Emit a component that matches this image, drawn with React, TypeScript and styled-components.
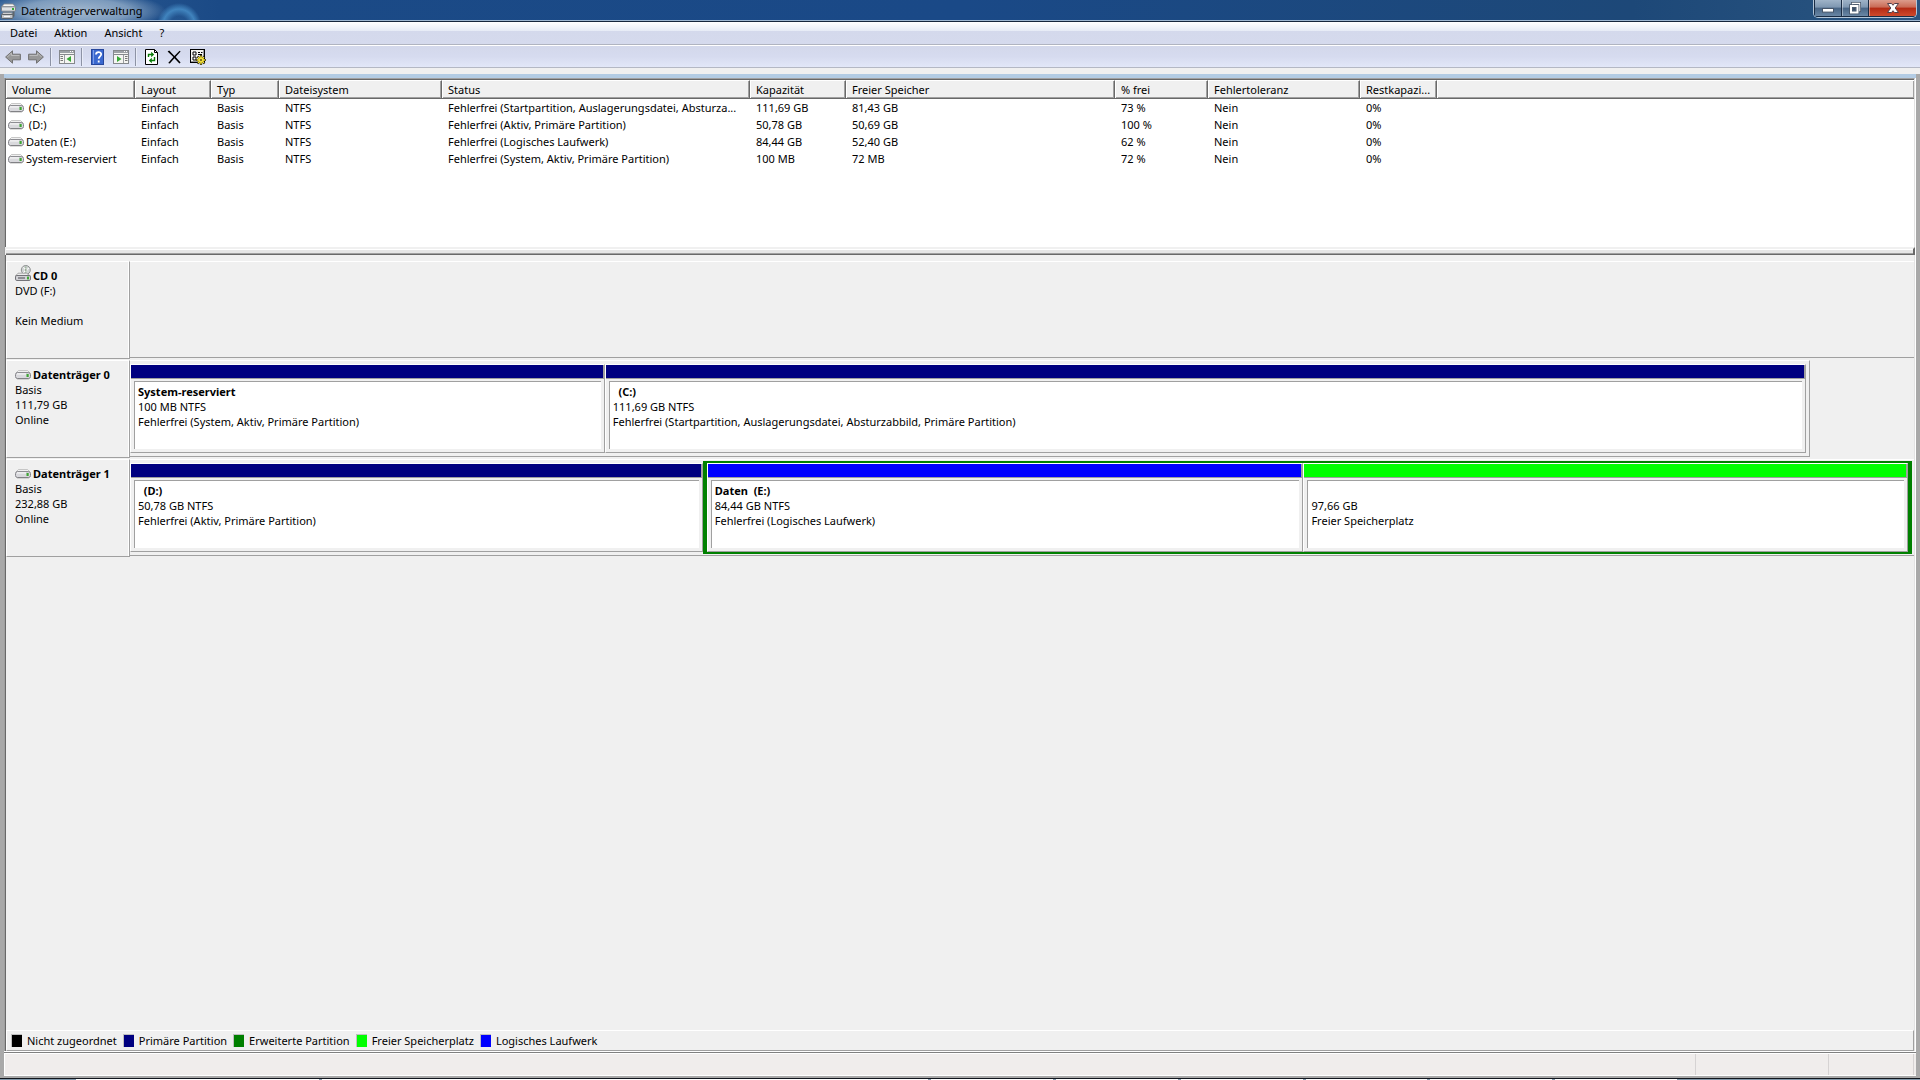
import React from "react";
import styled, { createGlobalStyle } from "styled-components";

const c = {
  face: "#f0f0f0",
  shade: "#a0a0a0",
  dark: "#696969",
  light: "#ffffff",
  frame: "#a9a9a9",
  navy: "#000080",
  blue: "#0000ff",
  green: "#008000",
  lime: "#00ff00",
};

const Global = createGlobalStyle`
  *, *::before, *::after { box-sizing: border-box; }
  body { margin: 0; background: ${c.frame}; color: #000; }
  body, button, table {
    font-family: "Noto Sans", "Open Sans", sans-serif;
    font-size: 11px;
    line-height: 15px;
  }
`;

const Desktop = styled.div`
  display: flex;
  flex-direction: column;
  min-height: 100vh;
`;

const Window = styled.main`
  flex: 1;
  display: flex;
  flex-direction: column;
  background: ${c.frame};
`;

/* ---------- title bar ---------- */

const TitleBar = styled.header`
  display: flex;
  align-items: flex-start;
  justify-content: space-between;
  height: 22px;
  border-bottom: 1px solid #16263c;
  box-shadow: inset 0 -1px 0 #9db6d0;
  background:
    radial-gradient(ellipse 90px 20px at 76px 11px, rgba(186, 202, 218, 0.85) 0%, rgba(160, 184, 208, 0.7) 60%, rgba(100, 140, 185, 0) 100%),
    radial-gradient(circle 22px at 179px 25px, rgba(70, 140, 200, 0.1) 40%, rgba(76, 150, 208, 0.75) 72%, rgba(70, 140, 200, 0) 100%),
    linear-gradient(90deg, #2d5c94 0, #1b4a86 220px, #1a4987 50%, #1d4878 85%, #2a5580 100%);
`;

const TitleGroup = styled.div`
  display: flex;
  align-items: center;
  gap: 5px;
  height: 21px;
  padding-left: 1px;
`;

const Title = styled.h1`
  margin: 0;
  font-size: 11px;
  font-weight: 400;
`;

const Caption = styled.div`
  display: flex;
  margin-right: 3px;
  border: 1px solid #b4c6d8;
  border-top: 0;
  border-radius: 0 0 5px 5px;
  overflow: hidden;
`;

const CaptionButton = styled.button<{ $close?: boolean }>`
  display: flex;
  align-items: center;
  justify-content: center;
  width: ${(p) => (p.$close ? 48 : 27)}px;
  height: 17px;
  padding: 0;
  border: 1px solid #1a2c44;
  border-width: 0 0 1px 1px;
  background: ${(p) =>
    p.$close
      ? "linear-gradient(#dc9c8c 0, #c96a55 45%, #b32a14 50%, #cf4a2c 100%)"
      : "linear-gradient(#9fb3c8 0, #7e97b1 45%, #486585 50%, #6a87a5 100%)"};
  & + & {
    box-shadow: inset 1px 0 0 rgba(255, 255, 255, 0.4);
  }
`;

/* ---------- menu and toolbar ---------- */

const MenuBar = styled.nav`
  display: flex;
  align-items: flex-start;
  gap: 1px;
  height: 23px;
  padding-left: 2px;
  border-bottom: 1px solid #b0b4c0;
  background: linear-gradient(#ffffff 0, #e6ebf6 9px, #d4d9ec 9px, #d5daed 100%);
`;

const MenuItem = styled.button`
  height: 21px;
  padding: 0 8px;
  border: 0;
  background: none;
`;

const Toolbar = styled.div`
  display: flex;
  align-items: center;
  gap: 1px;
  height: 23px;
  padding-left: 2px;
  border-top: 1px solid ${c.light};
  border-bottom: 1px solid #b4b8c4;
  background: linear-gradient(#d3d8eb 0, #d6dbef 50%, #e2e7f8 100%);
`;

const Tool = styled.button`
  display: flex;
  align-items: center;
  justify-content: center;
  width: 22px;
  height: 20px;
  padding: 0;
  border: 0;
  background: none;
`;

const Separator = styled.span`
  width: 2px;
  height: 18px;
  margin: 0 3px 0 2px;
  border-left: 1px solid #8d93a5;
  border-right: 1px solid #e8ecf8;
`;

const Spacer = styled.div`
  height: 6px;
  background: ${c.face};
`;

/* ---------- client area ---------- */

const Client = styled.div`
  flex: 1;
  display: flex;
  flex-direction: column;
  padding: 0 4px;
`;

const BlueStrip = styled.div`
  height: 4px;
  background: #b3cce4;
`;

const Panes = styled.div`
  flex: 1;
  display: flex;
  flex-direction: column;
  border-left: 1px solid ${c.shade};
  border-right: 1px solid ${c.light};
  background: ${c.face};
`;

const ListPane = styled.section`
  height: 169px;
  border-top: 1px solid ${c.shade};
  border-left: 1px solid ${c.dark};
  border-right: 1px solid #e3e3e3;
  background: ${c.light};
  box-shadow: inset 0 1px 0 ${c.dark};
`;

const Splitter = styled.div`
  height: 8px;
  margin-left: 1px;
  border-top: 2px solid ${c.face};
  border-bottom: 1px solid ${c.dark};
  border-right: 2px solid ${c.dark};
  background: linear-gradient(${c.light} 1px, #e6e6e6 1px, #e6e6e6 4px, ${c.shade} 4px);
`;

const VolumeTable = styled.table`
  width: 100%;
  margin-top: 1px;
  table-layout: fixed;
  border-collapse: separate;
  border-spacing: 0;
`;

const Col = styled.col<{ $w?: number }>`
  width: ${(p) => (p.$w ? `${p.$w}px` : "auto")};
`;

const HeadCell = styled.th`
  height: 19px;
  padding: 0 6px 1px;
  overflow: hidden;
  white-space: nowrap;
  text-align: left;
  font-weight: 400;
  background: ${c.face};
  border-top: 1px solid ${c.light};
  border-bottom: 1px solid ${c.dark};
  border-right: 1px solid ${c.dark};
  box-shadow: inset 1px 0 0 ${c.light}, inset -1px -1px 0 ${c.shade};
  &:last-child {
    border-right: 0;
  }
`;

const Cell = styled.td`
  height: 17px;
  padding: 0 6px;
  overflow: hidden;
  white-space: nowrap;
`;

const VolumeCell = styled(Cell)`
  padding: 0 2px;
`;

const VolumeName = styled.span`
  display: flex;
  align-items: center;
  gap: 2px;
  white-space: pre;
`;

const DiskPane = styled.section`
  flex: 1;
  display: flex;
  flex-direction: column;
  border-left: 1px solid ${c.dark};
  border-right: 1px solid #e3e3e3;
`;

const DiskList = styled.div`
  flex: 1;
  display: flex;
  flex-direction: column;
  gap: 1px;
  padding-top: 6px;
`;

const DiskRow = styled.article`
  display: flex;
  height: 98px;
`;

const DiskLabel = styled.div`
  flex: none;
  width: 124px;
  padding: 6px 0 0 8px;
  border: 1px solid ${c.shade};
  border-top-color: ${c.light};
  border-left-color: ${c.light};
  box-shadow: inset -1px 0 0 ${c.light};
`;

const DiskName = styled.h2`
  display: flex;
  align-items: flex-end;
  gap: 2px;
  height: 15px;
  margin: 0;
  font-size: 11px;
  font-weight: 700;
  svg {
    margin-bottom: 2px;
  }
`;

const Line = styled.p`
  min-height: 15px;
  margin: 0;
`;

const DiskTrack = styled.div`
  flex: 1;
  display: flex;
`;

const DiskFrame = styled.div<{ $share: number; $flush?: boolean }>`
  flex: none;
  display: flex;
  align-items: center;
  width: ${(p) => p.$share}%;
  height: 97px;
  padding-right: ${(p) => (p.$flush ? 2 : 3)}px;
  border-top: 1px solid ${c.light};
  border-bottom: 1px solid ${c.shade};
  border-right: ${(p) => (p.$flush ? "0" : `1px solid ${c.shade}`)};
`;

const Part = styled.div<{ $grow: number }>`
  flex: ${(p) => p.$grow} 1 0;
  min-width: 0;
  display: flex;
  flex-direction: column;
  height: 89px;
  border: 1px solid ${c.shade};
  border-top-color: ${c.light};
  border-left-color: ${c.light};
  background: ${c.face};
`;

const PartBar = styled.div<{ $color: string }>`
  height: 14px;
  background: ${(p) => p.$color};
  border-right: 1px solid ${c.shade};
  border-bottom: 1px solid ${c.shade};
`;

const PartBody = styled.div`
  flex: 1;
  margin: 2px 3px 3px;
  padding: 2px 0 0 3px;
  overflow: hidden;
  white-space: pre;
  background: ${c.light};
  border-top: 1px solid ${c.shade};
  border-left: 1px solid ${c.shade};
`;

const PartName = styled.h3`
  height: 15px;
  margin: 0;
  font-size: 11px;
  font-weight: 700;
`;

const Extended = styled.div<{ $grow: number }>`
  flex: ${(p) => p.$grow} 1 0;
  min-width: 0;
  display: flex;
  height: 93px;
  border: solid ${c.green};
  border-width: 2px 4px;
`;

const Legend = styled.ul`
  display: flex;
  align-items: center;
  gap: 6px;
  height: 21px;
  margin: 0;
  padding: 0 4px 1px;
  list-style: none;
  border: 1px solid ${c.shade};
  border-top-color: ${c.light};
  border-left-color: ${c.light};
`;

const LegendItem = styled.li`
  display: flex;
  align-items: center;
  gap: 5px;
`;

const Swatch = styled.span<{ $color: string }>`
  width: 11px;
  height: 13px;
  border: 1px solid #c0c0c0;
  border-width: 1px 0 0 1px;
  background: ${(p) => p.$color};
`;

const StatusBar = styled.footer`
  display: grid;
  grid-template-columns: 1fr 133px 85px 2px;
  height: 25px;
  border-top: 1px solid ${c.light};
  border-bottom: 1px solid ${c.light};
  background: #f0edec;
  box-shadow: inset 0 1px 0 #808080, inset 0 2px 0 ${c.light}, inset 1px 0 0 ${c.light};
`;

const StatusPane = styled.div`
  margin-top: 2px;
  border-right: 1px solid #d6d3d3;
`;

const BottomEdge = styled.div`
  height: 2px;
  background: ${c.frame};
`;

const Taskbar = styled.div`
  display: flex;
  gap: 3px;
  height: 2px;
  padding: 0 243px 0 76px;
  border-top: 1px solid #10151c;
  background: #8197a9;
`;

const Task = styled.span<{ $grow: number }>`
  flex: ${(p) => p.$grow} 1 0;
  background: ${c.light};
`;

/* ---------- drawings ---------- */

const DriveIcon = () => (
  <svg width="16" height="10" viewBox="0 0 16 10" aria-hidden="true">
    <path d="M3.4 .6h9.2l2.4 2.4H1z" fill="#f6f6f6" stroke="#b4b4b4" strokeWidth=".8" />
    <rect x=".5" y="2.6" width="15" height="5.9" rx="2" fill="#d9d9dd" stroke="#85858a" />
    <path d="M2 3.9h9" stroke="#fff" />
    <path d="M2 9h12" stroke="#777" strokeOpacity=".5" />
    <rect x="11.5" y="4" width="2.2" height="3" fill="#3fa535" />
  </svg>
);

const CdIcon = () => (
  <svg width="16" height="16" viewBox="0 0 16 16" aria-hidden="true">
    <circle cx="10.8" cy="5" r="4.5" fill="#d0d4d4" stroke="#8c8f8f" />
    <path d="M8 2.2l2.8 2.8 3.4-1.8M10.8 5l-2.6 3" stroke="#fff" fill="none" />
    <path d="M10.8 1.5v6.5" stroke="#8fae8c" />
    <circle cx="10.8" cy="5" r="1.3" fill="#7f927b" stroke="#fff" strokeWidth=".6" />
    <path d="M3 8.2h8.5l4 2.8H.5z" fill="#ededed" stroke="#999" strokeWidth=".8" />
    <rect x=".5" y="10.5" width="15" height="5" rx="1.4" fill="#d2d2d6" stroke="#737378" />
    <path d="M3 13h7" stroke="#4d4d55" />
    <rect x="12" y="11.6" width="2" height="2.8" fill="#3fa535" />
  </svg>
);

const AppIcon = () => (
  <svg width="15" height="16" viewBox="0 0 15 16" aria-hidden="true">
    <path d="M3 1h9l2.4 3H.6z" fill="#f6f6f6" stroke="#8a8a8a" strokeWidth=".8" />
    <rect x=".5" y="3.8" width="14" height="4.4" rx="1" fill="#dfe2e5" stroke="#7b8187" />
    <rect x="11" y="5" width="2" height="2" fill="#38a836" />
    <path d="M12.5 8.5v5" stroke="#5f656b" strokeWidth="2" />
    <path d="M2 9.8h8.5l1.5 2H.6z" fill="#fff" stroke="#777" strokeWidth=".8" />
    <rect x=".5" y="11.4" width="11.5" height="4" rx="1" fill="#c3c7cb" stroke="#555b61" />
    <path d="M3 13.4h6" stroke="#fff" />
  </svg>
);

const ArrowIcon = ({ forward }: { forward?: boolean }) => (
  <svg width="16" height="14" viewBox="0 0 16 14" aria-hidden="true">
    <path
      d={forward ? "M15.4 7L8.5.8v3.4H.6v5.6h7.9v3.4z" : "M.6 7l6.9-6.2v3.4h7.9v5.6H7.5v3.4z"}
      fill="#989898"
      stroke="#727272"
    />
    <path d={forward ? "M1.6 5.5h8V3l4 4" : "M14.4 5.5h-8V3l-4 4"} fill="none" stroke="#bbb" />
  </svg>
);

const PanelIcon = ({ mirrored }: { mirrored?: boolean }) => (
  <svg width="16" height="14" viewBox="0 0 16 14" aria-hidden="true">
    <rect x=".5" y=".5" width="15" height="13" fill="#f5f5f2" stroke="#85888c" />
    <path d="M1 2h14" stroke="#9da1a6" strokeWidth="2" />
    <path d="M11 1.5h1M13 1.5h1" stroke="#fff" />
    <path d="M1 4.5h14" stroke="#85888c" />
    {mirrored ? (
      <>
        <path d="M10.5 5v8" stroke="#9a9da1" />
        <path d="M12 6.5h2.5M12 8.5h2.5M12 10.5h2.5" stroke="#777" />
        <path d="M4 6v6l4.5-3z" fill="#35a835" />
      </>
    ) : (
      <>
        <path d="M5.5 5v8" stroke="#9a9da1" />
        <path d="M1.5 6.5H4M1.5 8.5H4M1.5 10.5H4" stroke="#777" />
        <path d="M12 6v6L7.5 9z" fill="#35a835" />
      </>
    )}
  </svg>
);

const HelpIcon = () => (
  <svg width="16" height="16" viewBox="0 0 16 16" aria-hidden="true">
    <rect x="1.5" y=".5" width="12" height="15" fill="#3a68cf" stroke="#27479c" />
    <path d="M3.5 1v14" stroke="#7d9ee6" />
    <path d="M6 5.6c0-3.4 5.2-3.2 5.2-.3 0 2-2.5 2.2-2.5 4.5M8.7 11.4v2" fill="none" stroke="#fff" strokeWidth="1.8" />
  </svg>
);

const RefreshIcon = () => (
  <svg width="16" height="16" viewBox="0 0 16 16" aria-hidden="true">
    <path d="M1.5.5h9l3 3v12h-12z" fill="#fff" stroke="#000" />
    <path d="M10.5.5v3h3" fill="none" stroke="#000" />
    <path d="M4.5 8V5.5H8M10.5 8v3.5H7" fill="none" stroke="#0a7d0a" strokeWidth="1.4" />
    <path d="M7.2 2.8v5.4l3-2.7zM7.8 8.8v5.4l-3-2.7z" fill="#0a7d0a" />
  </svg>
);

const DeleteIcon = () => (
  <svg width="16" height="16" viewBox="0 0 16 16" aria-hidden="true">
    <path d="M.6 2.6l1.6-1.2L7.4 7l5.2-5.2 1 .6-5 5.7 5 5.4-1.2 1-5-5.2-4.6 5.2-1.6-.4 5.2-6z" fill="#000" />
  </svg>
);

const SettingsIcon = () => (
  <svg width="16" height="16" viewBox="0 0 16 16" aria-hidden="true">
    <rect x=".5" y=".5" width="14" height="13" fill="#f4f4f0" stroke="#000" />
    <path d="M1 12.5h13M13.5 1v12" stroke="#999" />
    <path d="M3 3h3v3H3zM3 8h3v3H3z" fill="#fff" stroke="#000" />
    <path d="M8 3.5h2M11 3.5h1.5M8 5.5h4" stroke="#000" />
    <path d="M11 6v10M6 11h10M7.5 7.5l7 7M14.5 7.5l-7 7" stroke="#000" strokeWidth="2.2" />
    <path d="M11 6.5v9M6.5 11h9M8 8l6 6M14 8l-6 6" stroke="#f2df38" strokeWidth="1.4" />
    <circle cx="11" cy="11" r="2.8" fill="#f2df38" />
    <circle cx="11" cy="11" r="1" fill="#5a5210" />
  </svg>
);

const MinimizeGlyph = () => (
  <svg width="12" height="12" viewBox="0 0 12 12" aria-hidden="true">
    <rect x=".5" y="6.5" width="11" height="3.6" fill="#fff" stroke="#47566a" />
  </svg>
);

const RestoreGlyph = () => (
  <svg width="14" height="14" viewBox="0 0 14 14" aria-hidden="true">
    <path d="M4.5 4V2.5h7v7H10" fill="none" stroke="#47566a" strokeWidth="3" />
    <path d="M4.5 4V2.5h7v7H10" fill="none" stroke="#fff" strokeWidth="1.4" />
    <rect x="3" y="5" width="6.5" height="6.5" fill="#5a7492" stroke="#47566a" strokeWidth="3.6" />
    <rect x="3" y="5" width="6.5" height="6.5" fill="none" stroke="#fff" strokeWidth="2" />
    <rect x="5" y="7" width="2.5" height="2.5" fill="#3c5068" />
  </svg>
);

const CloseGlyph = () => (
  <svg width="14" height="12" viewBox="0 0 14 12" aria-hidden="true">
    <path
      d="M1.5 1.5h4L7 3.3l1.5-1.8h4L9.2 6l3.3 4.5h-4L7 8.7l-1.5 1.8h-4L4.8 6z"
      fill="#fff"
      stroke="#53404a"
    />
  </svg>
);

/* ---------- data ---------- */

const columns: { title: string; width?: number }[] = [
  { title: "Volume", width: 129 },
  { title: "Layout", width: 76 },
  { title: "Typ", width: 68 },
  { title: "Dateisystem", width: 163 },
  { title: "Status", width: 308 },
  { title: "Kapazität", width: 96 },
  { title: "Freier Speicher", width: 269 },
  { title: "% frei", width: 93 },
  { title: "Fehlertoleranz", width: 152 },
  { title: "Restkapazi...", width: 77 },
  { title: "" },
];

const volumes = [
  [" (C:)", "Fehlerfrei (Startpartition, Auslagerungsdatei, Absturza...", "111,69 GB", "81,43 GB", "73 %"],
  [" (D:)", "Fehlerfrei (Aktiv, Primäre Partition)", "50,78 GB", "50,69 GB", "100 %"],
  ["Daten (E:)", "Fehlerfrei (Logisches Laufwerk)", "84,44 GB", "52,40 GB", "62 %"],
  ["System-reserviert", "Fehlerfrei (System, Aktiv, Primäre Partition)", "100 MB", "72 MB", "72 %"],
];

const legend = [
  ["Nicht zugeordnet", "#000000"],
  ["Primäre Partition", c.navy],
  ["Erweiterte Partition", c.green],
  ["Freier Speicherplatz", c.lime],
  ["Logisches Laufwerk", c.blue],
];

const tasks = [245, 613, 123, 123, 123, 123, 123, 123];

interface PartitionProps {
  name?: string;
  size: string;
  state: string;
  color: string;
  grow: number;
}

const Partition = ({ name, size, state, color, grow }: PartitionProps) => (
  <Part $grow={grow}>
    <PartBar $color={color} />
    <PartBody>
      {name ? <PartName>{name}</PartName> : <Line />}
      <Line>{size}</Line>
      <Line>{state}</Line>
    </PartBody>
  </Part>
);

interface DiskProps {
  name: string;
  lines: string[];
  icon: React.ReactNode;
  share: number;
  flush?: boolean;
  children?: React.ReactNode;
}

const Disk = ({ name, lines, icon, share, flush, children }: DiskProps) => (
  <DiskRow>
    <DiskLabel>
      <DiskName>
        {icon}
        {name}
      </DiskName>
      {lines.map((line, i) => (
        <Line key={i}>{line}</Line>
      ))}
    </DiskLabel>
    <DiskTrack>
      <DiskFrame $share={share} $flush={flush}>
        {children}
      </DiskFrame>
    </DiskTrack>
  </DiskRow>
);

export default function App() {
  return (
    <Desktop>
      <Global />
      <Window>
        <TitleBar>
          <TitleGroup>
            <AppIcon />
            <Title>Datenträgerverwaltung</Title>
          </TitleGroup>
          <Caption>
            <CaptionButton aria-label="Minimieren">
              <MinimizeGlyph />
            </CaptionButton>
            <CaptionButton aria-label="Verkleinern">
              <RestoreGlyph />
            </CaptionButton>
            <CaptionButton $close aria-label="Schließen">
              <CloseGlyph />
            </CaptionButton>
          </Caption>
        </TitleBar>
        <MenuBar>
          {["Datei", "Aktion", "Ansicht", "?"].map((item) => (
            <MenuItem key={item}>{item}</MenuItem>
          ))}
        </MenuBar>
        <Toolbar>
          <Tool aria-label="Zurück"><ArrowIcon /></Tool>
          <Tool aria-label="Vorwärts"><ArrowIcon forward /></Tool>
          <Separator />
          <Tool aria-label="Konsolenstruktur"><PanelIcon /></Tool>
          <Separator />
          <Tool aria-label="Hilfe"><HelpIcon /></Tool>
          <Tool aria-label="Aktionsbereich"><PanelIcon mirrored /></Tool>
          <Separator />
          <Tool aria-label="Aktualisieren"><RefreshIcon /></Tool>
          <Tool aria-label="Löschen"><DeleteIcon /></Tool>
          <Tool aria-label="Einstellungen"><SettingsIcon /></Tool>
        </Toolbar>
        <Spacer />
        <Client>
          <BlueStrip />
          <Panes>
            <ListPane>
              <VolumeTable>
                <colgroup>
                  {columns.map((col) => (
                    <Col key={col.title} $w={col.width} />
                  ))}
                </colgroup>
                <thead>
                  <tr>
                    {columns.map((col) => (
                      <HeadCell key={col.title}>{col.title}</HeadCell>
                    ))}
                  </tr>
                </thead>
                <tbody>
                  {volumes.map(([name, status, size, free, percent]) => (
                    <tr key={name}>
                      <VolumeCell>
                        <VolumeName>
                          <DriveIcon />
                          <span>{name}</span>
                        </VolumeName>
                      </VolumeCell>
                      <Cell>Einfach</Cell>
                      <Cell>Basis</Cell>
                      <Cell>NTFS</Cell>
                      <Cell>{status}</Cell>
                      <Cell>{size}</Cell>
                      <Cell>{free}</Cell>
                      <Cell>{percent}</Cell>
                      <Cell>Nein</Cell>
                      <Cell>0%</Cell>
                      <Cell />
                    </tr>
                  ))}
                </tbody>
              </VolumeTable>
            </ListPane>
            <Splitter />
            <DiskPane>
              <DiskList>
                <Disk name="CD 0" lines={["DVD (F:)", "", "Kein Medium"]} icon={<CdIcon />} share={100} flush />
                <Disk name="Datenträger 0" lines={["Basis", "111,79 GB", "Online"]} icon={<DriveIcon />} share={94.15}>
                  <Partition name="System-reserviert" size="100 MB NTFS" state="Fehlerfrei (System, Aktiv, Primäre Partition)" color={c.navy} grow={474} />
                  <Partition name="  (C:)" size="111,69 GB NTFS" state="Fehlerfrei (Startpartition, Auslagerungsdatei, Absturzabbild, Primäre Partition)" color={c.navy} grow={1202} />
                </Disk>
                <Disk name="Datenträger 1" lines={["Basis", "232,88 GB", "Online"]} icon={<DriveIcon />} share={100} flush>
                  <Partition name="  (D:)" size="50,78 GB NTFS" state="Fehlerfrei (Aktiv, Primäre Partition)" color={c.navy} grow={574} />
                  <Extended $grow={1208}>
                    <Partition name="Daten  (E:)" size="84,44 GB NTFS" state="Fehlerfrei (Logisches Laufwerk)" color={c.blue} grow={596} />
                    <Partition size="97,66 GB" state="Freier Speicherplatz" color={c.lime} grow={604} />
                  </Extended>
                </Disk>
              </DiskList>
              <Legend>
                {legend.map(([label, color]) => (
                  <LegendItem key={label}>
                    <Swatch $color={color} />
                    {label}
                  </LegendItem>
                ))}
              </Legend>
            </DiskPane>
          </Panes>
          <StatusBar>
            <StatusPane />
            <StatusPane />
            <StatusPane />
          </StatusBar>
          <BottomEdge />
        </Client>
      </Window>
      <Taskbar>
        {tasks.map((width, i) => (
          <Task key={i} $grow={width} />
        ))}
      </Taskbar>
    </Desktop>
  );
}
